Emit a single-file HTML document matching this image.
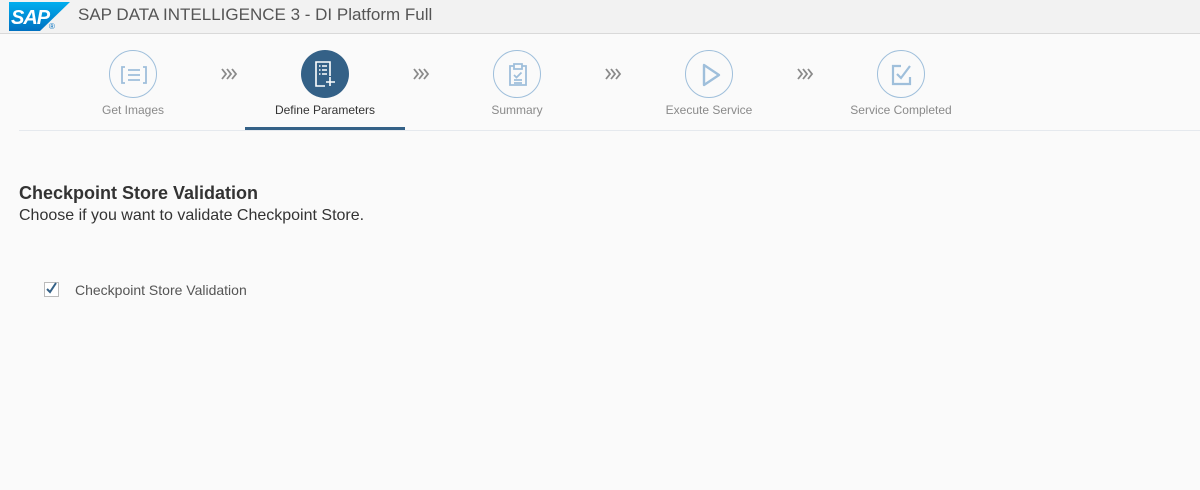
<!DOCTYPE html>
<html><head><style>
body{margin:0;width:1200px;height:490px;background:#fafafa;font-family:"Liberation Sans",sans-serif;position:relative;overflow:hidden}
.hdr{position:absolute;left:0;top:0;width:1200px;height:33px;background:#f2f2f2;border-bottom:1px solid #d9d9d9}
.title{position:absolute;left:78px;top:5px;font-size:17px;color:#555}
.c{position:absolute;width:48px;height:48px;border:1px solid #9fbfdb;border-radius:50%;top:50px;box-sizing:border-box}
.c svg{position:absolute;left:0;top:0}
.act{background:#346187;border:none}
.lbl{position:absolute;top:103px;font-size:12px;color:#8a8a8a;width:200px;text-align:center}
.arr{position:absolute;top:68px}
</style></head><body>
<div class="hdr">
<svg style="position:absolute;left:9px;top:2px" width="62" height="29" viewBox="0 0 62 29"><defs><linearGradient id="g" x1="0" y1="0" x2="0" y2="1"><stop offset="0" stop-color="#00aeef"/><stop offset="1" stop-color="#0070c0"/></linearGradient></defs><polygon points="0,0 61,0 31,29 0,29" fill="url(#g)"/><text x="2" y="22" font-family="Liberation Sans" font-weight="bold" font-size="20" font-style="italic" fill="#fff" letter-spacing="-1">SAP</text><text x="40" y="27" font-size="8" fill="#0070c0">®</text></svg>
<div class="title">SAP DATA INTELLIGENCE 3 - DI Platform Full</div>
</div>
<div class="c" style="left:109px"><svg width="48" height="48"><g fill="none" stroke="#9fbfdb" stroke-width="1.8"><path d="M15 16h-3v16h3M33 16h3v16h-3M18 19h12M18 24h12M18 29h12"/></g></svg></div>
<div class="c act" style="left:301px"><svg width="48" height="48"><g fill="none" stroke="#fff" stroke-width="1.6"><path d="M29 26V12H15v24h9"/><path d="M18 16h1.5M21 16h5M18 20h1.5M21 20h5M18 24h1.5M21 24h5M29 27v9M25 32h9"/></g></svg></div>
<div class="c" style="left:493px"><svg width="48" height="48"><g fill="none" stroke="#9fbfdb" stroke-width="1.8"><path d="M20 15h-4v19h16V15h-4M20 13h8v5h-8z"/><path d="M20 24l2.5 2.5 5-5M20 29h8M20 32h8"/></g></svg></div>
<div class="c" style="left:685px"><svg width="48" height="48"><path d="M18 14v20l15-10z" fill="none" stroke="#9fbfdb" stroke-width="2.4" stroke-linejoin="round"/></svg></div>
<div class="c" style="left:877px"><svg width="48" height="48"><g fill="none" stroke="#9fbfdb" stroke-width="2.2"><path d="M23 15h-8v18h17v-7M19 23l4 4 9-12"/></g></svg></div>
<svg class="arr" style="left:221px" width="18" height="12"><g fill="none" stroke="#8a8a8a" stroke-width="1.8"><path d="M1 1l4 5-4 5M6 1l4 5-4 5M11 1l4 5-4 5"/></g></svg>
<svg class="arr" style="left:413px" width="18" height="12"><g fill="none" stroke="#8a8a8a" stroke-width="1.8"><path d="M1 1l4 5-4 5M6 1l4 5-4 5M11 1l4 5-4 5"/></g></svg>
<svg class="arr" style="left:605px" width="18" height="12"><g fill="none" stroke="#8a8a8a" stroke-width="1.8"><path d="M1 1l4 5-4 5M6 1l4 5-4 5M11 1l4 5-4 5"/></g></svg>
<svg class="arr" style="left:797px" width="18" height="12"><g fill="none" stroke="#8a8a8a" stroke-width="1.8"><path d="M1 1l4 5-4 5M6 1l4 5-4 5M11 1l4 5-4 5"/></g></svg>
<div class="lbl" style="left:33px">Get Images</div>
<div class="lbl" style="left:225px;color:#333">Define Parameters</div>
<div class="lbl" style="left:417px">Summary</div>
<div class="lbl" style="left:609px">Execute Service</div>
<div class="lbl" style="left:801px">Service Completed</div>
<div style="position:absolute;left:19px;top:130px;width:1181px;height:1px;background:#e5e9ee"></div>
<div style="position:absolute;left:245px;top:127px;width:160px;height:3px;background:#346187"></div>
<div style="position:absolute;left:19px;top:183px;font-size:18px;font-weight:bold;color:#333">Checkpoint Store Validation</div>
<div style="position:absolute;left:19px;top:207px;font-size:16px;color:#333">Choose if you want to validate Checkpoint Store.</div>
<div style="position:absolute;left:44px;top:282px;width:15px;height:15px;border:1px solid #bbb;box-sizing:border-box;background:#fff"><svg width="15" height="15" style="position:absolute;left:-1px;top:-2px"><path d="M3 8l3 3 6-9" fill="none" stroke="#346187" stroke-width="2"/></svg></div>
<div style="position:absolute;left:75px;top:282px;font-size:14px;color:#555">Checkpoint Store Validation</div>
</body></html>
